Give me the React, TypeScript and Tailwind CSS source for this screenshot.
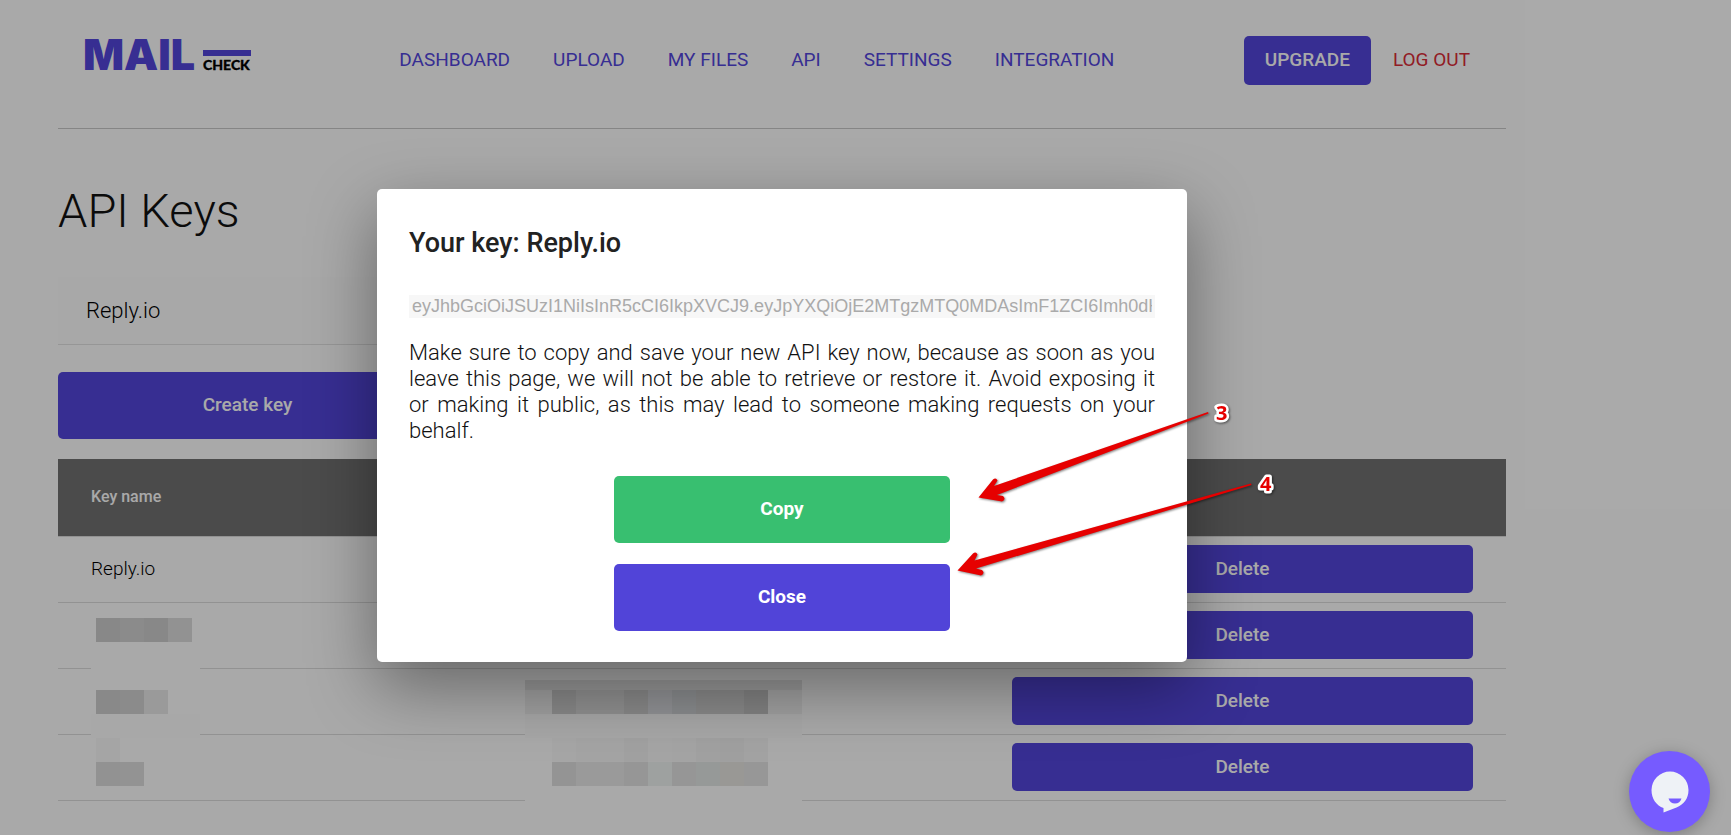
import React from "react";

const navItems = ["DASHBOARD", "UPLOAD", "MY FILES", "API", "SETTINGS", "INTEGRATION"];

type Row = { id: number; name: React.ReactNode; value: React.ReactNode };

function NameMask() {
  return (
    <svg width="109" height="170" aria-hidden="true" className="absolute left-[33px] top-[14px]">
      <rect width="109" height="170" fill="#fafafa" />
      <rect x="5" y="1" width="24" height="24" fill="#c9c9c9" />
      <rect x="29" y="1" width="24" height="24" fill="#cdcdcd" />
      <rect x="53" y="1" width="24" height="24" fill="#c9c9c9" />
      <rect x="77" y="1" width="24" height="24" fill="#d8d8d8" />
      <rect x="5" y="73" width="24" height="24" fill="#cbcbcb" />
      <rect x="29" y="73" width="24" height="24" fill="#cdcdcd" />
      <rect x="53" y="73" width="24" height="24" fill="#e4e4e4" />
      <rect y="97" width="109" height="24" fill="#f8f8f8" />
      <rect x="5" y="121" width="24" height="24" fill="#f3f3f3" />
      <rect x="5" y="145" width="24" height="24" fill="#d7d7d7" />
      <rect x="29" y="145" width="24" height="24" fill="#d9d9d9" />
    </svg>
  );
}

const maskTop = ["#cacaca", "#d4d4d4", "#d4d4d4", "#cacaca", "#d6d8dc", "#cccfd2", "#cbcbcb", "#cbcbcb", "#c0c0c0"];
const maskFaint = ["#f5f5f5", "#f2f2f2", "#f2f2f2", "#ededed", "#f4f4f4", "#f2f2f2", "#eeeeee", "#ececec", "#f1f1f1"];
const maskBottom = ["#dadada", "#e4e4e4", "#e4e4e4", "#dddddd", "#e9eeec", "#dddddd", "#dee2e0", "#e2e1dc", "#dfdfdf"];

function ValueMask() {
  return (
    <svg width="277" height="124" aria-hidden="true" className="absolute left-[33px] top-[11px]">
      <rect width="277" height="124" fill="#fafafa" />
      <rect width="277" height="10" fill="#e0e0e0" />
      <rect y="10" width="277" height="24" fill="#ececec" />
      <rect y="34" width="277" height="24" fill="#f6f6f6" />
      {maskTop.map((c, i) => (
        <rect key={"t" + i} x={27 + i * 24} y="10" width="24" height="24" fill={c} />
      ))}
      {maskFaint.map((c, i) => (
        <rect key={"f" + i} x={27 + i * 24} y="58" width="24" height="24" fill={c} />
      ))}
      {maskBottom.map((c, i) => (
        <rect key={"b" + i} x={27 + i * 24} y="82" width="24" height="24" fill={c} />
      ))}
    </svg>
  );
}

const rows: Row[] = [
  { id: 1, name: "Reply.io", value: null },
  { id: 2, name: <NameMask />, value: null },
  { id: 3, name: null, value: <ValueMask /> },
  { id: 4, name: null, value: null },
];

function Logo() {
  return (
    <a href="#" aria-label="Mail Check">
      <svg width="187" height="81" viewBox="0 0 187 81" className="block overflow-visible font-black">
        <text x="0" y="50" fontSize="43" fill="#5144d8" className="font-['Inter',sans-serif]">
          MAIL
        </text>
        <rect x="120" y="30" width="48" height="6" fill="#5144d8" />
        <text x="120" y="50" fontSize="14" fill="#000" stroke="#000" strokeWidth="0.3" className="font-['Lato',sans-serif]">
          CHECK
        </text>
      </svg>
    </a>
  );
}

function Header() {
  return (
    <header className="flex h-[129px] items-center justify-between border-b border-[#c4c4c4] pr-9 pb-[7px] pl-[25px]">
      <Logo />
      <nav className="flex items-center gap-[43px]">
        {navItems.map((item) => (
          <a key={item} href="#" className="text-[19px] whitespace-nowrap text-[#5144d8]">
            {item}
          </a>
        ))}
      </nav>
      <div className="flex items-center gap-[22px]">
        <button type="button" className="h-[49px] rounded-[5px] bg-[#5144d8] px-[21px] text-[19px] font-medium text-[#fafafa]">
          UPGRADE
        </button>
        <a href="#" className="text-[19px] whitespace-nowrap text-[#d62a36]">
          LOG OUT
        </a>
      </div>
    </header>
  );
}

function KeyTable() {
  return (
    <table className="mt-5 w-full table-fixed border-collapse text-left">
      <colgroup>
        <col className="w-[30%]" />
        <col className="w-[33.6%]" />
        <col className="w-[36.4%]" />
      </colgroup>
      <thead>
        <tr className="h-[77px] border-b border-[#d7d7d7] bg-[#6f6f6f] text-[16px] text-[#fafafa]">
          <th scope="col" className="px-[33px] font-medium">Key name</th>
          <th scope="col" className="px-[33px] font-medium">Key</th>
          <th scope="col" className="px-[33px]" aria-label="Actions" />
        </tr>
      </thead>
      <tbody>
        {rows.map((row) => (
          <tr key={row.id} className="h-[66px] border-b border-[#d7d7d7]">
            <td className="relative px-[33px] text-[19px] font-light text-black">{row.name}</td>
            <td className="relative px-[33px]">{row.value}</td>
            <td className="px-[33px]">
              <button type="button" className="block h-12 w-full rounded-[5px] bg-[#5144d8] text-[19px] font-medium text-[#fafafa]">
                Delete
              </button>
            </td>
          </tr>
        ))}
      </tbody>
    </table>
  );
}

function KeyDialog() {
  return (
    <div
      role="dialog"
      aria-modal="true"
      aria-labelledby="dialog-title"
      className="w-full max-w-[810px] rounded-[5px] bg-white px-8 pt-9 pb-[31px] shadow-[0_24px_68px_rgba(0,0,0,0.4)]"
    >
      <h2 id="dialog-title" className="text-[27px] leading-9 font-medium text-[#222]">
        Your key: Reply.io
      </h2>
      <input
        aria-label="API key"
        readOnly
        value="eyJhbGciOiJSUzI1NiIsInR5cCI6IkpXVCJ9.eyJpYXQiOjE2MTgzMTQ0MDAsImF1ZCI6Imh0dHBzOi8v"
        className="mt-[34px] block h-[23px] w-full bg-[#f7f7f7] px-[3px] font-['Liberation_Sans',Arial,sans-serif] text-[18px] text-[#aaa]"
      />
      <p className="mt-[22px] text-justify text-[22px] leading-[26px] font-light text-[#111]">
        Make sure to copy and save your new API key now, because as soon as you leave this page, we will not be able to
        retrieve or restore it. Avoid exposing it or&nbsp;making it public, as this may lead to someone making requests
        on your behalf.
      </p>
      <div className="mx-auto mt-8 flex w-[336px] flex-col gap-[21px]">
        <button type="button" className="h-[67px] rounded-[5px] bg-[#38bf70] text-[19px] font-bold text-white">
          Copy
        </button>
        <button type="button" className="h-[67px] rounded-[5px] bg-[#5144d8] text-[19px] font-bold text-white">
          Close
        </button>
      </div>
    </div>
  );
}

function Annotations() {
  return (
    <svg
      width="350"
      height="190"
      className="pointer-events-none absolute top-[400px] left-[950px] drop-shadow-[1px_1px_1px_rgba(0,0,0,0.5)]"
    >
      <g fill="#e60000">
        <path d="M258 12 L44 86 L47.500 80.500 Q46 77 43 79.500 L28.500 97.500 L52 101.500 Q56.500 99.500 53 96 L47 95 L258.500 13.500 Z" />
        <path d="M301 83.500 L24.500 160.500 L27.500 154.500 Q26 151 23 153.500 L7.500 170.500 L31 175.500 Q35.500 173.500 32 170 L26 168.500 L301.500 85 Z" />
      </g>
      <g
        fill="#e60000"
        stroke="#fff"
        strokeWidth="5"
        strokeLinejoin="round"
        paintOrder="stroke"
        fontSize="20"
        className="font-['Open_Sans',sans-serif] font-bold"
      >
        <text x="266" y="20">3</text>
        <text x="310" y="91">4</text>
      </g>
    </svg>
  );
}

export default function App() {
  return (
    <div className="relative min-h-screen overflow-hidden bg-[#fafafa] font-['Roboto',sans-serif]">
      <div className="pr-[225px] pl-[58px]">
        <Header />
        <main>
          <h1 className="mt-[55px] text-[47px] leading-[54px] font-light text-[#111]">API Keys</h1>
          <input
            aria-label="Key name"
            defaultValue="Reply.io"
            className="mt-[39px] block h-[68px] w-full max-w-[480px] border-b border-[#dedede] bg-[#f8f8f8] px-7 text-[22px] font-light text-black"
          />
          <button type="button" className="mt-[27px] block h-[67px] w-[379px] rounded-[5px] bg-[#5144d8] text-[19px] font-medium text-[#fafafa]">
            Create key
          </button>
          <KeyTable />
        </main>
      </div>

      <div className="absolute inset-0 flex items-center justify-center bg-black/32 pt-4 pr-[167px]">
        <KeyDialog />
      </div>

      <Annotations />

      <button
        type="button"
        aria-label="Open chat"
        className="absolute right-[21px] bottom-[3px] flex size-[81px] items-center justify-center rounded-full bg-[#765bff] shadow-[0_3px_16px_rgba(0,0,0,0.25)]"
      >
        <svg width="38" height="42" viewBox="0 0 38 42" aria-hidden="true">
          <path
            d="M19 0.5a18.5 18.5 0 0 1 18.5 18.5c0 9-5 14.500-12 17.500L12.500 41.500v-4.500C5.500 34.500 0.500 28 0.500 19A18.500 18.500 0 0 1 19 0.500z"
            fill="#eef2f6"
          />
          <path d="M17.500 27.500H30.500c-.8 3-3.300 5-6.500 5s-5.700-2-6.500-5z" fill="#765bff" />
        </svg>
      </button>
    </div>
  );
}
